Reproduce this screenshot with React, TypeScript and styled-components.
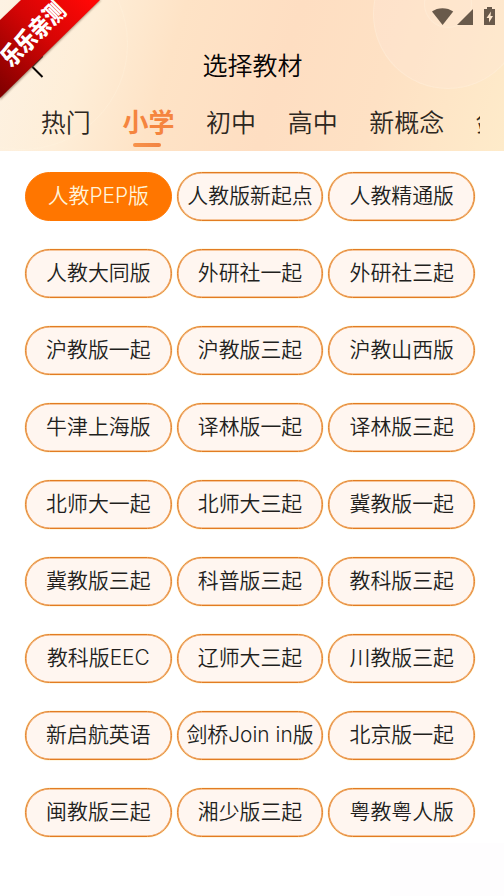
import styled, { createGlobalStyle } from "styled-components";

const GlobalStyle = createGlobalStyle`
  * {
    box-sizing: border-box;
  }

  body {
    margin: 0;
    background: #fff;
    font-family: Inter, "Noto Sans CJK SC", sans-serif;
  }
`;

const Page = styled.main`
  position: relative;
  height: 896px;
  overflow: hidden;
  background: #fff;
`;

const Header = styled.header`
  position: relative;
  z-index: 0;
  height: 151px;
  overflow: hidden;
  background: linear-gradient(
    107deg,
    #fdf2e3 0%,
    #feeed8 18%,
    #fee3c6 34%,
    #fedec2 55%,
    #fee1c4 74%,
    #feebca 100%
  );
`;

const Circle = styled.div<{ $x: number; $y: number; $r: number; $alpha: number }>`
  position: absolute;
  z-index: -1;
  left: ${(p) => p.$x - p.$r}px;
  top: ${(p) => p.$y - p.$r}px;
  width: ${(p) => p.$r * 2}px;
  height: ${(p) => p.$r * 2}px;
  border: 1px solid rgba(255, 245, 225, 0.3);
  border-radius: 50%;
  background: rgba(255, 232, 218, ${(p) => p.$alpha});
`;

const StatusBar = styled.div`
  height: 34px;
  padding: 7px 8px 0 0;
  display: flex;
  justify-content: flex-end;

  svg {
    display: block;
  }
`;

const TitleBar = styled.div`
  height: 64px;
  display: grid;
  grid-template-columns: 60px 1fr 59px;
  align-items: center;

  h1 {
    margin: 0;
    font-size: 25px;
    line-height: 36px;
    font-weight: 350;
    text-align: center;
    color: #050303;
  }
`;

const BackButton = styled.button`
  padding: 2px 0 0 28px;
  border: 0;
  background: none;

  svg {
    display: block;
  }
`;

const Tabs = styled.nav`
  height: 53px;
  margin: 0 24px 0 25px;
  display: flex;
  overflow: hidden;
`;

const Tab = styled.button<{ $active?: boolean }>`
  position: relative;
  flex: none;
  height: 53px;
  padding: 6px 15.8px 0;
  display: flex;
  border: 0;
  background: none;
  font-family: inherit;
  font-size: ${(p) => (p.$active ? 26 : 25)}px;
  font-weight: ${(p) => (p.$active ? 700 : 350)};
  line-height: 38px;
  color: ${(p) => (p.$active ? "#f5853f" : "#2d2721")};

  &::after {
    content: "";
    display: ${(p) => (p.$active ? "block" : "none")};
    position: absolute;
    left: 26.400px;
    top: 45px;
    width: 28px;
    height: 4px;
    border-radius: 2px;
    background: linear-gradient(90deg, #f7934b, #f28343);
  }
`;

const Grid = styled.section`
  padding: 21px 29px 0 25px;
  display: grid;
  grid-template-columns: repeat(3, 146.7px);
  gap: 28px 5px;
`;

const Pill = styled.button<{ $selected?: boolean }>`
  height: 49px;
  padding: 0 0 1px;
  border: 1px solid ${(p) => (p.$selected ? "#ff7600" : "#e27c22")};
  border-radius: 25px;
  background: ${(p) => (p.$selected ? "#ff7600" : "#fff6f0")};
  box-shadow: ${(p) =>
    p.$selected ? "none" : "inset 0 0 0 0.6px #ee9345, 0 0 0 0.6px #fff0c8"};
  font-family: inherit;
  font-size: 20.9px;
  font-weight: 350;
  line-height: 30px;
  white-space: nowrap;
  color: ${(p) => (p.$selected ? "#fff3d9" : "#221f1d")};
`;

const Ribbon = styled.div`
  position: absolute;
  z-index: 2;
  left: 0;
  top: 0;
  width: 106px;
  height: 106px;

  svg {
    display: block;
  }
`;

const RibbonText = styled.span`
  position: absolute;
  left: -11px;
  top: 18px;
  width: 88px;
  transform: rotate(-45deg) scaleX(0.9) scaleY(1.1);
  font-size: 22px;
  font-weight: 900;
  line-height: 32px;
  text-align: center;
  color: #fff;
`;

// barely tinted patch in the bottom right corner
const CornerTint = styled.div`
  position: absolute;
  right: 0;
  bottom: 0;
  width: 114px;
  height: 53px;
  background: #fefdfe;
`;

const tabs = ["热门", "小学", "初中", "高中", "新概念", "剑桥"];

const books = [
  "人教PEP版", "人教版新起点", "人教精通版",
  "人教大同版", "外研社一起", "外研社三起",
  "沪教版一起", "沪教版三起", "沪教山西版",
  "牛津上海版", "译林版一起", "译林版三起",
  "北师大一起", "北师大三起", "冀教版一起",
  "冀教版三起", "科普版三起", "教科版三起",
  "教科版EEC", "辽师大三起", "川教版三起",
  "新启航英语", "剑桥Join in版", "北京版一起",
  "闽教版三起", "湘少版三起", "粤教粤人版",
];

function StatusIcons() {
  return (
    <svg width="64" height="19" viewBox="0 0 64 19" fill="#695a4b">
      <path d="M0 4.5C5.5 0 15.5 0 21.2 4.5L10.6 18Z" />
      <path d="M25 18L41 2V18Z" />
      <path d="M55 0H60V2H63V18H52V2H55ZM59 4.5L54.5 11H57V15.5L61 9H58.5Z" fillRule="evenodd" />
    </svg>
  );
}

// corner ribbon, lies over the header
function CornerRibbon() {
  return (
    <Ribbon>
      <svg width="106" height="106" viewBox="0 0 106 106">
        <defs>
          <linearGradient id="red" gradientUnits="userSpaceOnUse" x1="90" y1="0" x2="0" y2="90">
            <stop offset="0" stopColor="#ff0806" />
            <stop offset="0.45" stopColor="#d50505" />
            <stop offset="1" stopColor="#830000" />
          </linearGradient>
          <filter id="soft">
            <feGaussianBlur stdDeviation="1" />
          </filter>
        </defs>
        <path d="M22 0H101L0 100V22Z" fill="#70563f" opacity="0.65" filter="url(#soft)" />
        <path d="M21 0H100L0 98V20Z" fill="url(#red)" />
      </svg>
      <RibbonText>乐乐亲测</RibbonText>
    </Ribbon>
  );
}

export default function App() {
  return (
    <>
      <GlobalStyle />
      <Page>
        <Header>
          <Circle $x={22} $y={44} $r={106} $alpha={0} />
          <Circle $x={448} $y={14} $r={75} $alpha={0.3} />
          <Circle $x={448} $y={4} $r={24} $alpha={0.15} />
          <StatusBar>
            <StatusIcons />
          </StatusBar>
          <TitleBar>
            <BackButton aria-label="返回">
              <svg width="16" height="24" viewBox="0 0 16 24" fill="none" stroke="#090604" strokeWidth="2">
                <path d="M14.5 1L4 11.5L14.5 22" />
              </svg>
            </BackButton>
            <h1>选择教材</h1>
          </TitleBar>
          <Tabs>
            {tabs.map((tab) => (
              <Tab key={tab} $active={tab === "小学"}>{tab}</Tab>
            ))}
          </Tabs>
        </Header>
        <Grid>
          {books.map((book, i) => (
            <Pill key={book} $selected={i === 0}>{book}</Pill>
          ))}
        </Grid>
        <CornerTint />
        <CornerRibbon />
      </Page>
    </>
  );
}
